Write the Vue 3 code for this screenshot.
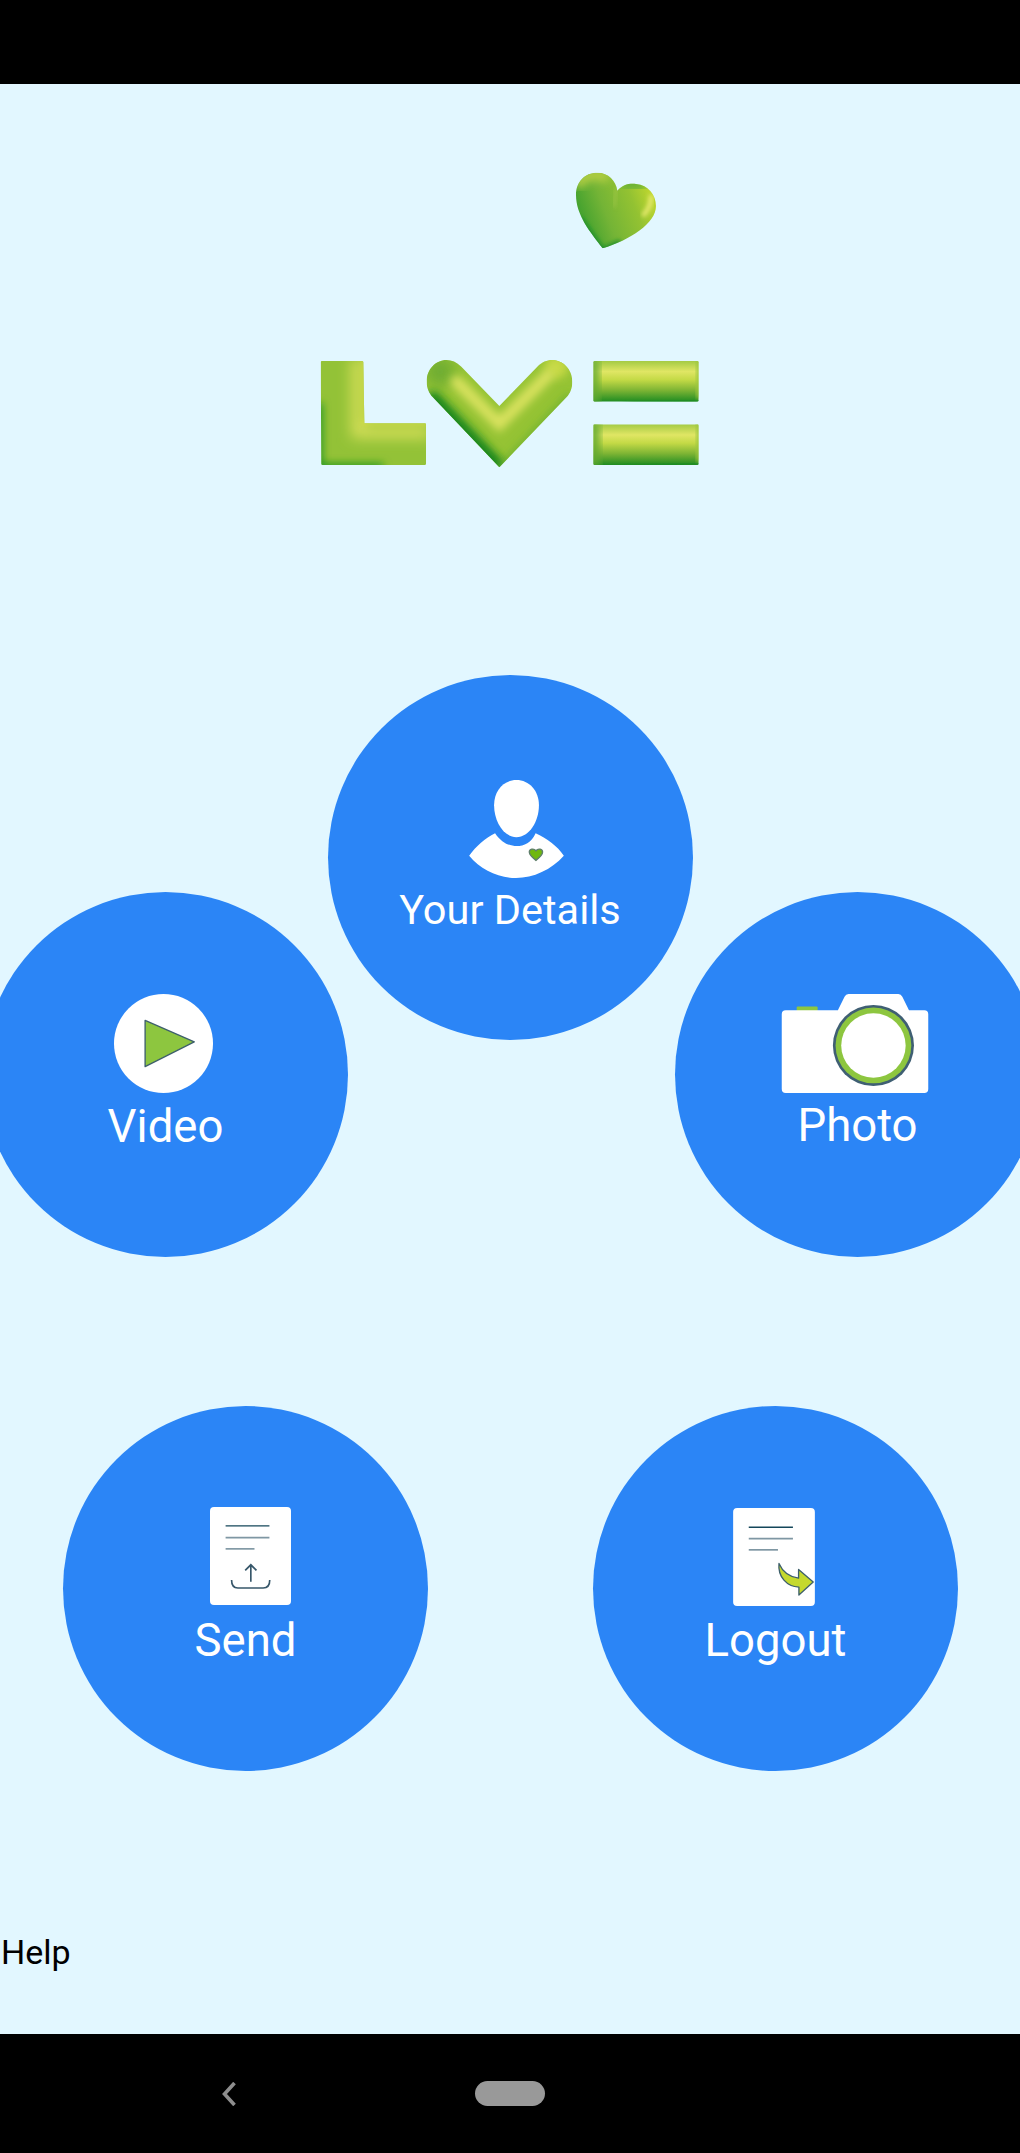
<script setup>
</script>

<template>
  <div class="page">
    <div class="status"></div>
    <main class="screen">
      <svg class="logo" viewBox="0 0 1260 1020" width="420" height="340" role="img" aria-label="LV logo">
        <defs>
          <filter id="b6" x="-30%" y="-30%" width="160%" height="160%"><feGaussianBlur stdDeviation="6" /></filter>
          <filter id="b12" x="-30%" y="-30%" width="160%" height="160%"><feGaussianBlur stdDeviation="12" /></filter>
          <filter id="b20" x="-40%" y="-40%" width="180%" height="180%"><feGaussianBlur stdDeviation="20" /></filter>
          <clipPath id="clipL"><path d="M66 633H186Q190 633 190 637L193 820H375Q378 820 378 824V941Q378 945 374 945H68Q64 945 64 941L62 637Q62 633 66 633Z" /></clipPath>
          <clipPath id="clipV"><path d="M598 768L484 650C440 606 380 640 380 695C380 715 388 730 398 741L598 952L800 741C810 730 817 715 817 695C817 640 755 606 712 650Z" /></clipPath>
          <clipPath id="clipB1"><rect x="880" y="633" width="316" height="122" rx="4" /></clipPath>
          <clipPath id="clipB2"><rect x="880" y="823" width="316" height="122" rx="4" /></clipPath>
          <clipPath id="clipH"><path d="M908 295C870 245 828 195 828 135C828 95 855 68 892 68C925 68 948 92 952 122C968 105 985 100 1008 102C1045 105 1068 135 1068 168C1068 220 990 270 908 295Z" /></clipPath>
          <linearGradient id="barG" x1="0" y1="0" x2="0" y2="1">
            <stop offset="0" stop-color="#a4cb45" />
            <stop offset=".26" stop-color="#e0e664" />
            <stop offset=".46" stop-color="#c4da46" />
            <stop offset=".72" stop-color="#7db434" />
            <stop offset="1" stop-color="#1f8c22" />
          </linearGradient>
          <linearGradient id="heartG" x1="0" y1=".75" x2="1" y2=".4">
            <stop offset="0" stop-color="#2c992b" />
            <stop offset=".4" stop-color="#74b436" />
            <stop offset=".72" stop-color="#93c232" />
            <stop offset="1" stop-color="#c6da2e" />
          </linearGradient>
        </defs>

        <g clip-path="url(#clipL)">
          <rect x="60" y="620" width="320" height="340" fill="#93c237" />
          <path d="M58 625V950" fill="none" stroke="#3f9f2c" stroke-width="44" filter="url(#b20)" />
          <path d="M172 625V846H390" fill="none" stroke="#d8e05a" stroke-width="36" filter="url(#b20)" />
          <path d="M188 630V822H385" fill="none" stroke="#d3dd4a" stroke-width="8" filter="url(#b6)" />
          <path d="M180 950H385" fill="none" stroke="#74b031" stroke-width="44" filter="url(#b20)" />
          <path d="M58 760V950H250" fill="none" stroke="#118a1c" stroke-width="16" filter="url(#b12)" />
        </g>

        <g clip-path="url(#clipV)">
          <rect x="370" y="620" width="460" height="340" fill="#95c334" />
          <path d="M385 735L598 958" fill="none" stroke="#15861f" stroke-width="50" filter="url(#b12)" />
          <path d="M810 735L598 958" fill="none" stroke="#5aa82e" stroke-width="12" filter="url(#b12)" />
          <circle cx="420" cy="665" r="45" fill="#6fad32" filter="url(#b20)" />
          <circle cx="770" cy="650" r="35" fill="#c6d944" filter="url(#b12)" />
          <path d="M470 695L598 822L745 675" fill="none" stroke="#d9e25e" stroke-width="36" stroke-linecap="round" filter="url(#b12)" />
        </g>

        <g clip-path="url(#clipB1)">
          <rect x="880" y="633" width="316" height="122" fill="url(#barG)" />
          <rect x="866" y="625" width="30" height="140" fill="#63aa30" filter="url(#b12)" />
          <rect x="1190" y="625" width="14" height="120" fill="#9cc63c" filter="url(#b6)" />
          <path d="M980 770L1200 756" stroke="#1b8a20" stroke-width="20" filter="url(#b12)" />
        </g>
        <g clip-path="url(#clipB2)">
          <rect x="880" y="823" width="316" height="122" fill="url(#barG)" />
          <rect x="866" y="815" width="32" height="140" fill="#63aa30" filter="url(#b12)" />
          <rect x="1190" y="815" width="14" height="120" fill="#9cc63c" filter="url(#b6)" />
          <path d="M980 960L1200 946" stroke="#1b8a20" stroke-width="20" filter="url(#b12)" />
        </g>

        <g clip-path="url(#clipH)">
          <rect x="820" y="60" width="260" height="240" fill="url(#heartG)" />
          <path d="M832 110Q860 55 925 85" fill="none" stroke="#b8d044" stroke-width="30" filter="url(#b12)" />
          <path d="M950 112Q944 140 942 172" fill="none" stroke="#a8cb4e" stroke-width="10" opacity=".6" filter="url(#b6)" />
          <path d="M970 108Q1000 92 1035 112" fill="none" stroke="#4fa838" stroke-width="22" filter="url(#b12)" />
          <path d="M1053 135Q1056 170 1028 198" fill="none" stroke="#e6ea6e" stroke-width="14" filter="url(#b6)" />
          <path d="M840 205L908 300L960 275" fill="none" stroke="#138a2b" stroke-width="12" filter="url(#b6)" />
        </g>
      </svg>

      <div class="row row-top">
        <button class="bubble details">
          <svg class="icon" viewBox="237 60 285 295" width="95" height="98">
            <path fill="#fff" d="M379 60C418 60 447 92 447 136C447 185 418 232 379 232C341 232 312 185 312 136C312 92 341 60 379 60Z" />
            <path fill="#fff" d="M315 220C335 250 360 259 380 259C402 259 425 248 437 220C470 236 503 258 522 288C485 330 430 355 378 355C325 355 272 330 237 288C258 258 285 236 315 220Z" />
            <path fill="#6fb80f" stroke="#5f7f6c" stroke-width="4" d="M438 302C430 296 418 287 418 277C418 268 431 264 438 273C445 264 458 268 458 277C458 287 446 296 438 302Z" />
          </svg>
          <span class="label">Your Details</span>
        </button>
      </div>

      <div class="row row-mid">
        <button class="bubble video">
          <svg class="icon" viewBox="72 72 296 296" width="99" height="99">
            <circle cx="220" cy="220" r="148" fill="#fff" />
            <path d="M165 151L312 215L165 289Z" fill="#8dc63f" stroke="#3d5f6b" stroke-width="4" stroke-linejoin="round" />
          </svg>
          <span class="label">Video</span>
        </button>
        <button class="bubble photo">
          <svg class="icon" viewBox="65 72 441 298" width="148" height="99">
            <rect x="110" y="110" width="63" height="20" rx="3" fill="#8dc63f" />
            <path fill="#fff" d="M77 121H234L254 80Q258 72 266 72H416Q424 72 428 80L448 121H494Q506 121 506 133V358Q506 370 494 370H77Q65 370 65 358V133Q65 121 77 121Z" />
            <circle cx="341" cy="227" r="122" fill="#3f5f73" />
            <circle cx="341" cy="227" r="114" fill="#8dc63f" />
            <circle cx="341" cy="227" r="97" fill="#fff" />
          </svg>
          <span class="label">Photo</span>
        </button>
      </div>

      <div class="row row-low">
        <button class="bubble send">
          <svg class="icon" viewBox="88 52 244 295" width="81" height="98">
            <rect x="88" y="52" width="244" height="295" rx="12" fill="#fff" />
            <path d="M135 109H267" stroke="#14475a" stroke-width="4" />
            <path d="M135 144H267" stroke="#7f97a3" stroke-width="5" />
            <path d="M135 178H222" stroke="#7f97a3" stroke-width="5" />
            <path d="M211 277V226M194 243L211 226L228 243" fill="none" stroke="#37576a" stroke-width="5" />
            <path d="M153 272C153 290 162 296 172 296H248C260 296 268 290 268 272" fill="none" stroke="#37576a" stroke-width="5" />
          </svg>
          <span class="label">Send</span>
        </button>
        <button class="bubble logout">
          <svg class="icon" viewBox="98 55 246 295" width="82" height="98">
            <rect x="98" y="55" width="246" height="295" rx="12" fill="#fff" />
            <path d="M145 113H278" stroke="#14475a" stroke-width="4" />
            <path d="M145 147H278" stroke="#7f97a3" stroke-width="5" />
            <path d="M145 181H233" stroke="#7f97a3" stroke-width="5" />
            <path d="M236 222C246 245 265 262 295 266V240L339 278L296 317V293C260 292 232 262 236 222Z" fill="#c5d92d" stroke="#3d5f6b" stroke-width="4" stroke-linejoin="round" />
          </svg>
          <span class="label">Logout</span>
        </button>
      </div>

      <p class="help">Help</p>
    </main>
    <nav class="nav">
      <svg class="chevron" viewBox="0 0 14 24" width="14" height="24">
        <path d="M12.5 1L2.5 12L12.5 23" fill="none" stroke="#8e8e8e" stroke-width="3.6" />
      </svg>
      <span class="pill"></span>
    </nav>
  </div>
</template>

<style>
html, body { margin: 0; background: #000; }
</style>

<style scoped>
.page {
  width: 1020px;
  height: 2153px;
  display: flex;
  flex-direction: column;
  overflow: hidden;
  font-family: Roboto, "Liberation Sans", sans-serif;
}
.status { height: 84px; flex: none; background: #000; }
.screen {
  height: 1950px;
  flex: none;
  background: #e2f7ff;
  display: flex;
  flex-direction: column;
  overflow: hidden;
}
.logo { display: block; flex: none; margin: 66px 0 0 300px; }
.row { display: flex; flex: none; }
.row-top { justify-content: center; margin-top: 185px; }
.row-mid { justify-content: space-between; margin: -148px -20px 0 -17px; }
.row-low { gap: 165px; margin-top: 149px; padding-left: 63px; }
.bubble {
  width: 365px;
  height: 365px;
  flex: none;
  box-sizing: border-box;
  border: 0;
  border-radius: 50%;
  background: #2b85f6;
  color: #fff;
  font: inherit;
  display: flex;
  flex-direction: column;
  align-items: center;
}
.icon { display: block; flex: none; }
.label { display: block; font-size: 45.5px; line-height: 52px; white-space: nowrap; }
.details { padding-top: 105px; }
.details .icon { margin: 0 0 8px 12px; }
.details .label { font-size: 41.5px; line-height: 48px; }
.video { padding-top: 102px; }
.video .icon { margin: 0 5px 8px 0; }
.photo { padding-top: 102px; }
.photo .icon { margin: 0 6px 7px 0; }
.send { padding-top: 101px; }
.send .icon { margin: 0 0 10px 9px; }
.logout { padding-top: 102px; }
.logout .icon { margin: 0 3px 9px 0; }
.help {
  margin: 161px 0 0 1px;
  font-size: 34px;
  line-height: 40px;
  color: #000;
}
.nav {
  height: 119px;
  flex: none;
  background: #000;
  display: flex;
  align-items: center;
  padding-left: 222px;
  box-sizing: border-box;
}
.chevron { display: block; flex: none; }
.pill {
  display: block;
  width: 70px;
  height: 25px;
  margin-left: 239px;
  border-radius: 12.5px;
  background: #999;
}
</style>
